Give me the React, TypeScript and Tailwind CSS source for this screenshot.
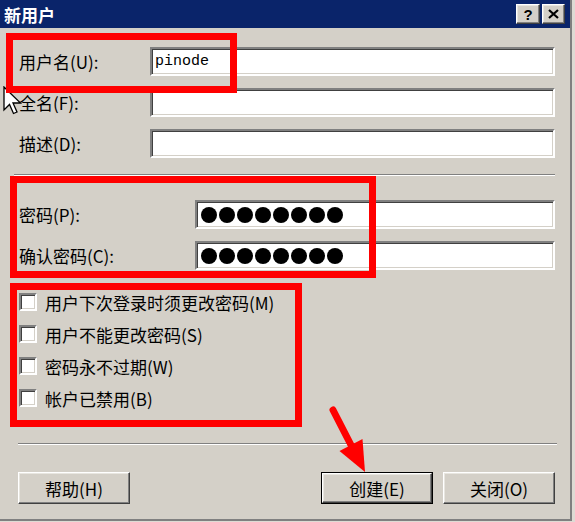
import { type FC } from "react";

const sunken =
  "border-2 border-t-[#808080] border-l-[#808080] border-b-white border-r-white shadow-[inset_1px_1px_0_#404040,inset_-1px_-1px_0_#d4d0c8] bg-white";
const raised =
  "border border-t-white border-l-white border-r-[#404040] border-b-[#404040] shadow-[inset_-1px_-1px_0_#808080,inset_1px_1px_0_#e8e6e0] bg-[#d4d0c8]";

const Field: FC<{ label: string; labelW: string; children?: React.ReactNode }> = ({ label, labelW, children }) => {
  return (
    <div className="flex items-center h-[29px]">
      <div className={`${labelW} shrink-0`}>{label}</div>
      <div className={`flex-1 h-[29px] flex items-center ${sunken}`}>{children}</div>
    </div>
  );
};

const Dots: FC = () => {
  return (
    <div className="flex gap-[2px] pl-[4px]">
      {[0, 1, 2, 3, 4, 5, 6, 7].map((i) => (
        <div key={i} className="w-[16px] h-[16px] rounded-full bg-black" />
      ))}
    </div>
  );
};

const Check: FC<{ label: string }> = ({ label }) => {
  return (
    <div className="flex items-center h-[32px]">
      <div className={`w-[18px] h-[18px] ${sunken}`} />
      <span className="ml-[8px]">{label}</span>
    </div>
  );
};

const App: FC = () => {
  return (
    <div className="relative w-[575px] h-[522px] overflow-hidden bg-[#dedbd4] text-[17px] leading-none text-black font-['Noto_Sans_CJK_SC',sans-serif]">
      <div className="w-[572px] h-[521px] bg-[#d4d0c8] border-r-2 border-b-2 border-[#808080] flex flex-col">
        {/* title bar */}
        <div className="h-[28px] bg-[#0a246a] flex items-center justify-between pl-[4px] pr-[5px] shrink-0">
          <span className="text-white font-bold text-[17px]">新用户</span>
          <div className="flex gap-[2px]">
            <div className={`w-[24px] h-[20px] flex items-center justify-center ${raised}`}>
              <span className="font-['Liberation_Sans',sans-serif] font-bold text-[15px]">?</span>
            </div>
            <div className={`w-[23px] h-[20px] flex items-center justify-center ${raised}`}>
              <svg width="11" height="10" viewBox="0 0 11 10">
                <path d="M1 1 L10 9 M10 1 L1 9" stroke="black" strokeWidth="2.2" />
              </svg>
            </div>
          </div>
        </div>

        <div className="flex flex-col pl-[19px] pr-[15px]">
          <div className="mt-[19px] flex flex-col gap-[12px]">
            <Field label="用户名(U):" labelW="w-[131px]">
              <span className="pl-[3px] font-['Liberation_Mono',monospace] text-[15px]">pinode</span>
            </Field>
            <Field label="全名(F):" labelW="w-[131px]" />
            <Field label="描述(D):" labelW="w-[131px]" />
          </div>

          <div className="mt-[16px] -ml-[5px] h-[2px] border-t border-t-[#808080] border-b border-b-white" />

          <div className="mt-[24px] flex flex-col gap-[12px]">
            <Field label="密码(P):" labelW="w-[176px]">
              <Dots />
            </Field>
            <Field label="确认密码(C):" labelW="w-[176px]">
              <Dots />
            </Field>
          </div>

          <div className="mt-[16px] flex flex-col">
            <Check label="用户下次登录时须更改密码(M)" />
            <Check label="用户不能更改密码(S)" />
            <Check label="密码永不过期(W)" />
            <Check label="帐户已禁用(B)" />
          </div>

          <div className="mt-[29px] -ml-[1px] mr-[-2px] h-[2px] border-t border-t-[#808080] border-b border-b-white" />

          <div className="mt-[27px] flex justify-between -ml-[1px]">
            <button className={`w-[112px] h-[32px] flex items-center justify-center ${raised}`}>帮助(H)</button>
            <div className="flex gap-[10px]">
              <button className="w-[112px] h-[32px] border border-black">
                <div className={`w-full h-full flex items-center justify-center ${raised}`}>创建(E)</div>
              </button>
              <button className={`w-[112px] h-[32px] flex items-center justify-center ${raised}`}>关闭(O)</button>
            </div>
          </div>
        </div>
      </div>

      {/* mouse cursor */}
      <svg className="absolute left-[3px] top-[86px]" width="20" height="30" viewBox="0 0 20 30">
        <path d="M1 1 L1 24 L6.5 18.5 L10.5 27.5 L14 26 L10 17 L17.5 17 Z" fill="white" stroke="black" strokeWidth="1.3" />
      </svg>

      {/* red annotation boxes */}
      <div className="absolute left-[6px] top-[33px] w-[231px] h-[60px] border-[7px] border-[#ff0000]" />
      <div className="absolute left-[10px] top-[176px] w-[366px] h-[102px] border-[7px] border-[#ff0000]" />
      <div className="absolute left-[10px] top-[283px] w-[292px] h-[144px] border-[7px] border-[#ff0000]" />

      {/* red arrow */}
      <svg className="absolute left-0 top-0" width="575" height="522" viewBox="0 0 575 522">
        <line x1="333" y1="410" x2="352" y2="447" stroke="#ff0000" strokeWidth="7" strokeLinecap="round" />
        <polygon points="365,472 339.5,451 362.5,439" fill="#ff0000" />
      </svg>
    </div>
  );
};

export default App;
